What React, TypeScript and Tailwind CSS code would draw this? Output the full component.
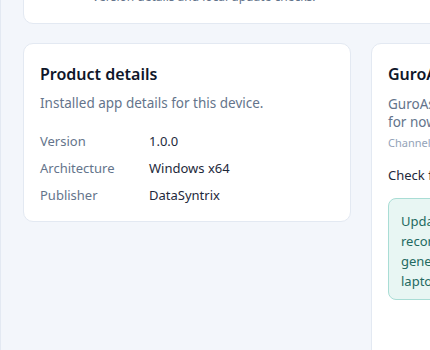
import { Info } from "lucide-react";

function Row({ label, value }: { label: string; value: string }) {
  return (
    <div className="flex text-[13px] leading-5">
      <span className="w-[109px] text-[#64748b]">{label}</span>
      <span className="text-[#1e293b]">{value}</span>
    </div>
  );
}

export default function App() {
  return (
    <div className="w-[430px] h-[350px] overflow-hidden bg-[#f3f6fb] border-l border-[#e3e9f2] font-['Noto_Sans',sans-serif]">
      <div className="w-[720px] px-[22px]">
        {/* header card, scrolled mostly out of view */}
        <div className="-mt-[62px] bg-white border border-[#e3e9f2] rounded-[10px] p-4 flex gap-3">
          <div className="w-10 h-10 rounded-lg bg-[#e6f6f3] flex items-center justify-center text-[#1f7a6e]">
            <Info size={20} />
          </div>
          <div className="flex flex-col">
            <h1 className="text-[16px] leading-7 font-semibold text-[#0f172a]">About GuroAssist</h1>
            <p className="mt-1 text-[12px] leading-5 text-[#64748b]">
              Version details and local update checks.
            </p>
          </div>
        </div>

        <div className="mt-[19px] grid grid-cols-2 gap-5 items-start">
          <div className="bg-white border border-[#e3e9f2] rounded-[10px] p-4">
            <h2 className="text-[16px] leading-7 font-semibold text-[#0f172a]">Product details</h2>
            <p className="mt-[5px] text-[13.5px] leading-5 text-[#64748b]">
              Installed app details for this device.
            </p>
            <div className="mt-[18px] flex flex-col gap-[7px]">
              <Row label="Version" value="1.0.0" />
              <Row label="Architecture" value="Windows x64" />
              <Row label="Publisher" value="DataSyntrix" />
            </div>
          </div>

          <div className="bg-white border border-[#e3e9f2] rounded-[10px] p-4 min-h-[340px]">
            <h2 className="text-[16px] leading-7 font-semibold text-[#0f172a]">GuroAssist updates</h2>
            <p className="mt-[7px] text-[13.5px] leading-[18px] text-[#64748b]">
              GuroAssist checks for new versions
              <br />
              for now, on request only.
            </p>
            <p className="mt-1 text-[11px] leading-4 text-[#94a3b8]">Channel: Stable</p>
            <p className="mt-[14px] text-[13px] leading-5 text-[#1e293b]">Check for updates</p>
            <div className="mt-[13px] bg-[#e8f6f3] border border-[#a9ddd5] rounded-lg px-3 pt-3 pb-2 text-[13px] leading-5 text-[#236a61] whitespace-nowrap">
              Update checks run on demand and
              <br />
              recorded locally. Release notes are
              <br />
              generated per build and stay on
              <br />
              laptop until you clear them.
            </div>
          </div>
        </div>
      </div>
    </div>
  );
}
